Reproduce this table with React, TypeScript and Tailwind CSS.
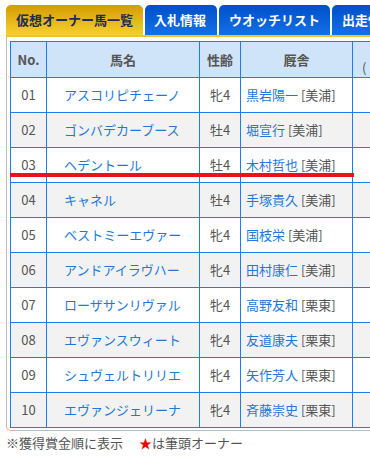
import React from "react";

const horses = [
    { no: "01", name: "アスコリピチェーノ", sex: "牝4", trainer: "黒岩陽一", area: "美浦" },
    { no: "02", name: "ゴンバデカーブース", sex: "牡4", trainer: "堀宣行", area: "美浦" },
    { no: "03", name: "ヘデントール", sex: "牡4", trainer: "木村哲也", area: "美浦" },
    { no: "04", name: "キャネル", sex: "牡4", trainer: "手塚貴久", area: "美浦" },
    { no: "05", name: "ベストミーエヴァー", sex: "牝4", trainer: "国枝栄", area: "美浦" },
    { no: "06", name: "アンドアイラヴハー", sex: "牝4", trainer: "田村康仁", area: "美浦" },
    { no: "07", name: "ローザサンリヴァル", sex: "牝4", trainer: "高野友和", area: "栗東" },
    { no: "08", name: "エヴァンスウィート", sex: "牝4", trainer: "友道康夫", area: "栗東" },
    { no: "09", name: "シュヴェルトリリエ", sex: "牝4", trainer: "矢作芳人", area: "栗東" },
    { no: "10", name: "エヴァンジェリーナ", sex: "牝4", trainer: "斉藤崇史", area: "栗東" },
];

export default function App() {
    return (
        <div className="w-[370px] h-[457px] overflow-hidden bg-white pt-[5px] pl-[6px] text-[13px] text-[#555]" style={{ fontFamily: '"Noto Sans CJK JP", "Noto Sans", sans-serif' }}>
            {/* tabs */}
            <div className="flex gap-[2px] h-[30px] w-[420px] font-bold">
                <div className="w-[137px] shrink-0 rounded-t-[5px] bg-gradient-to-b from-[#d49c00] to-[#f6d02a] text-[#1c2a5c] px-[10px] flex items-center">仮想オーナー馬一覧</div>
                <div className="w-[72px] shrink-0 rounded-t-[5px] bg-gradient-to-b from-[#0050c8] to-[#1470e8] text-white px-[9px] flex items-center">入札情報</div>
                <div className="w-[111px] shrink-0 rounded-t-[5px] bg-gradient-to-b from-[#0050c8] to-[#1470e8] text-white px-[10px] flex items-center">ウオッチリスト</div>
                <div className="w-[90px] shrink-0 rounded-t-[5px] bg-gradient-to-b from-[#0050c8] to-[#1470e8] text-white px-[10px] flex items-center">出走情報</div>
            </div>
            <div className="h-[2px] w-[420px] bg-[#f2c230]"></div>

            {/* list box */}
            <div className="relative w-[420px] border-l border-b border-[#bbb] rounded-bl-[5px] pt-[4px] pl-[3px] pb-[2px]">
                <table className="border-collapse table-fixed w-[422px]">
                    <colgroup>
                        <col className="w-[36px]" />
                        <col className="w-[153px]" />
                        <col className="w-[41px]" />
                        <col className="w-[112px]" />
                        <col className="w-[80px]" />
                    </colgroup>
                    <thead>
                        <tr className="h-[36px] bg-[#cfe3f9] font-bold text-[#555]">
                            <th className="border border-[#1a7ef0] text-[13px]">No.</th>
                            <th className="border border-[#1a7ef0] text-[13px]">馬名</th>
                            <th className="border border-[#1a7ef0] text-[13px]">性齢</th>
                            <th className="border border-[#1a7ef0] text-[13px]">厩舎</th>
                            <th className="border border-[#1a7ef0] text-[13px] font-normal text-left pl-[9px] leading-[16px]">
                                <div>&nbsp;</div>
                                <div>(</div>
                            </th>
                        </tr>
                    </thead>
                    <tbody>
                        {horses.map((h, i) => (
                            <tr key={h.no} className={"h-[35px] " + (i % 2 === 1 ? "bg-[#f2f2f2]" : "bg-white")}>
                                <td className="border border-[#1a7ef0] text-center">{h.no}</td>
                                <td className="border border-[#1a7ef0] pl-[17px] text-[#1e78d8] whitespace-nowrap">{h.name}</td>
                                <td className="border border-[#1a7ef0] text-center">{h.sex}</td>
                                <td className="border border-[#1a7ef0] pl-[5px] whitespace-nowrap">
                                    <span className="text-[#1e78d8]">{h.trainer}</span> [{h.area}]
                                </td>
                                <td className="border border-[#1a7ef0]"></td>
                            </tr>
                        ))}
                    </tbody>
                </table>
                {/* red marker line */}
                <div className="absolute top-[136px] left-[3px] w-[344px] h-[4px] bg-[#e8141c]"></div>
            </div>

            <div className="h-[24px] flex items-center text-[#555]">
                ※獲得賞金順に表示
                <span className="ml-[16px] text-[#e00]">★</span>
                は筆頭オーナー
            </div>
        </div>
    )
}
